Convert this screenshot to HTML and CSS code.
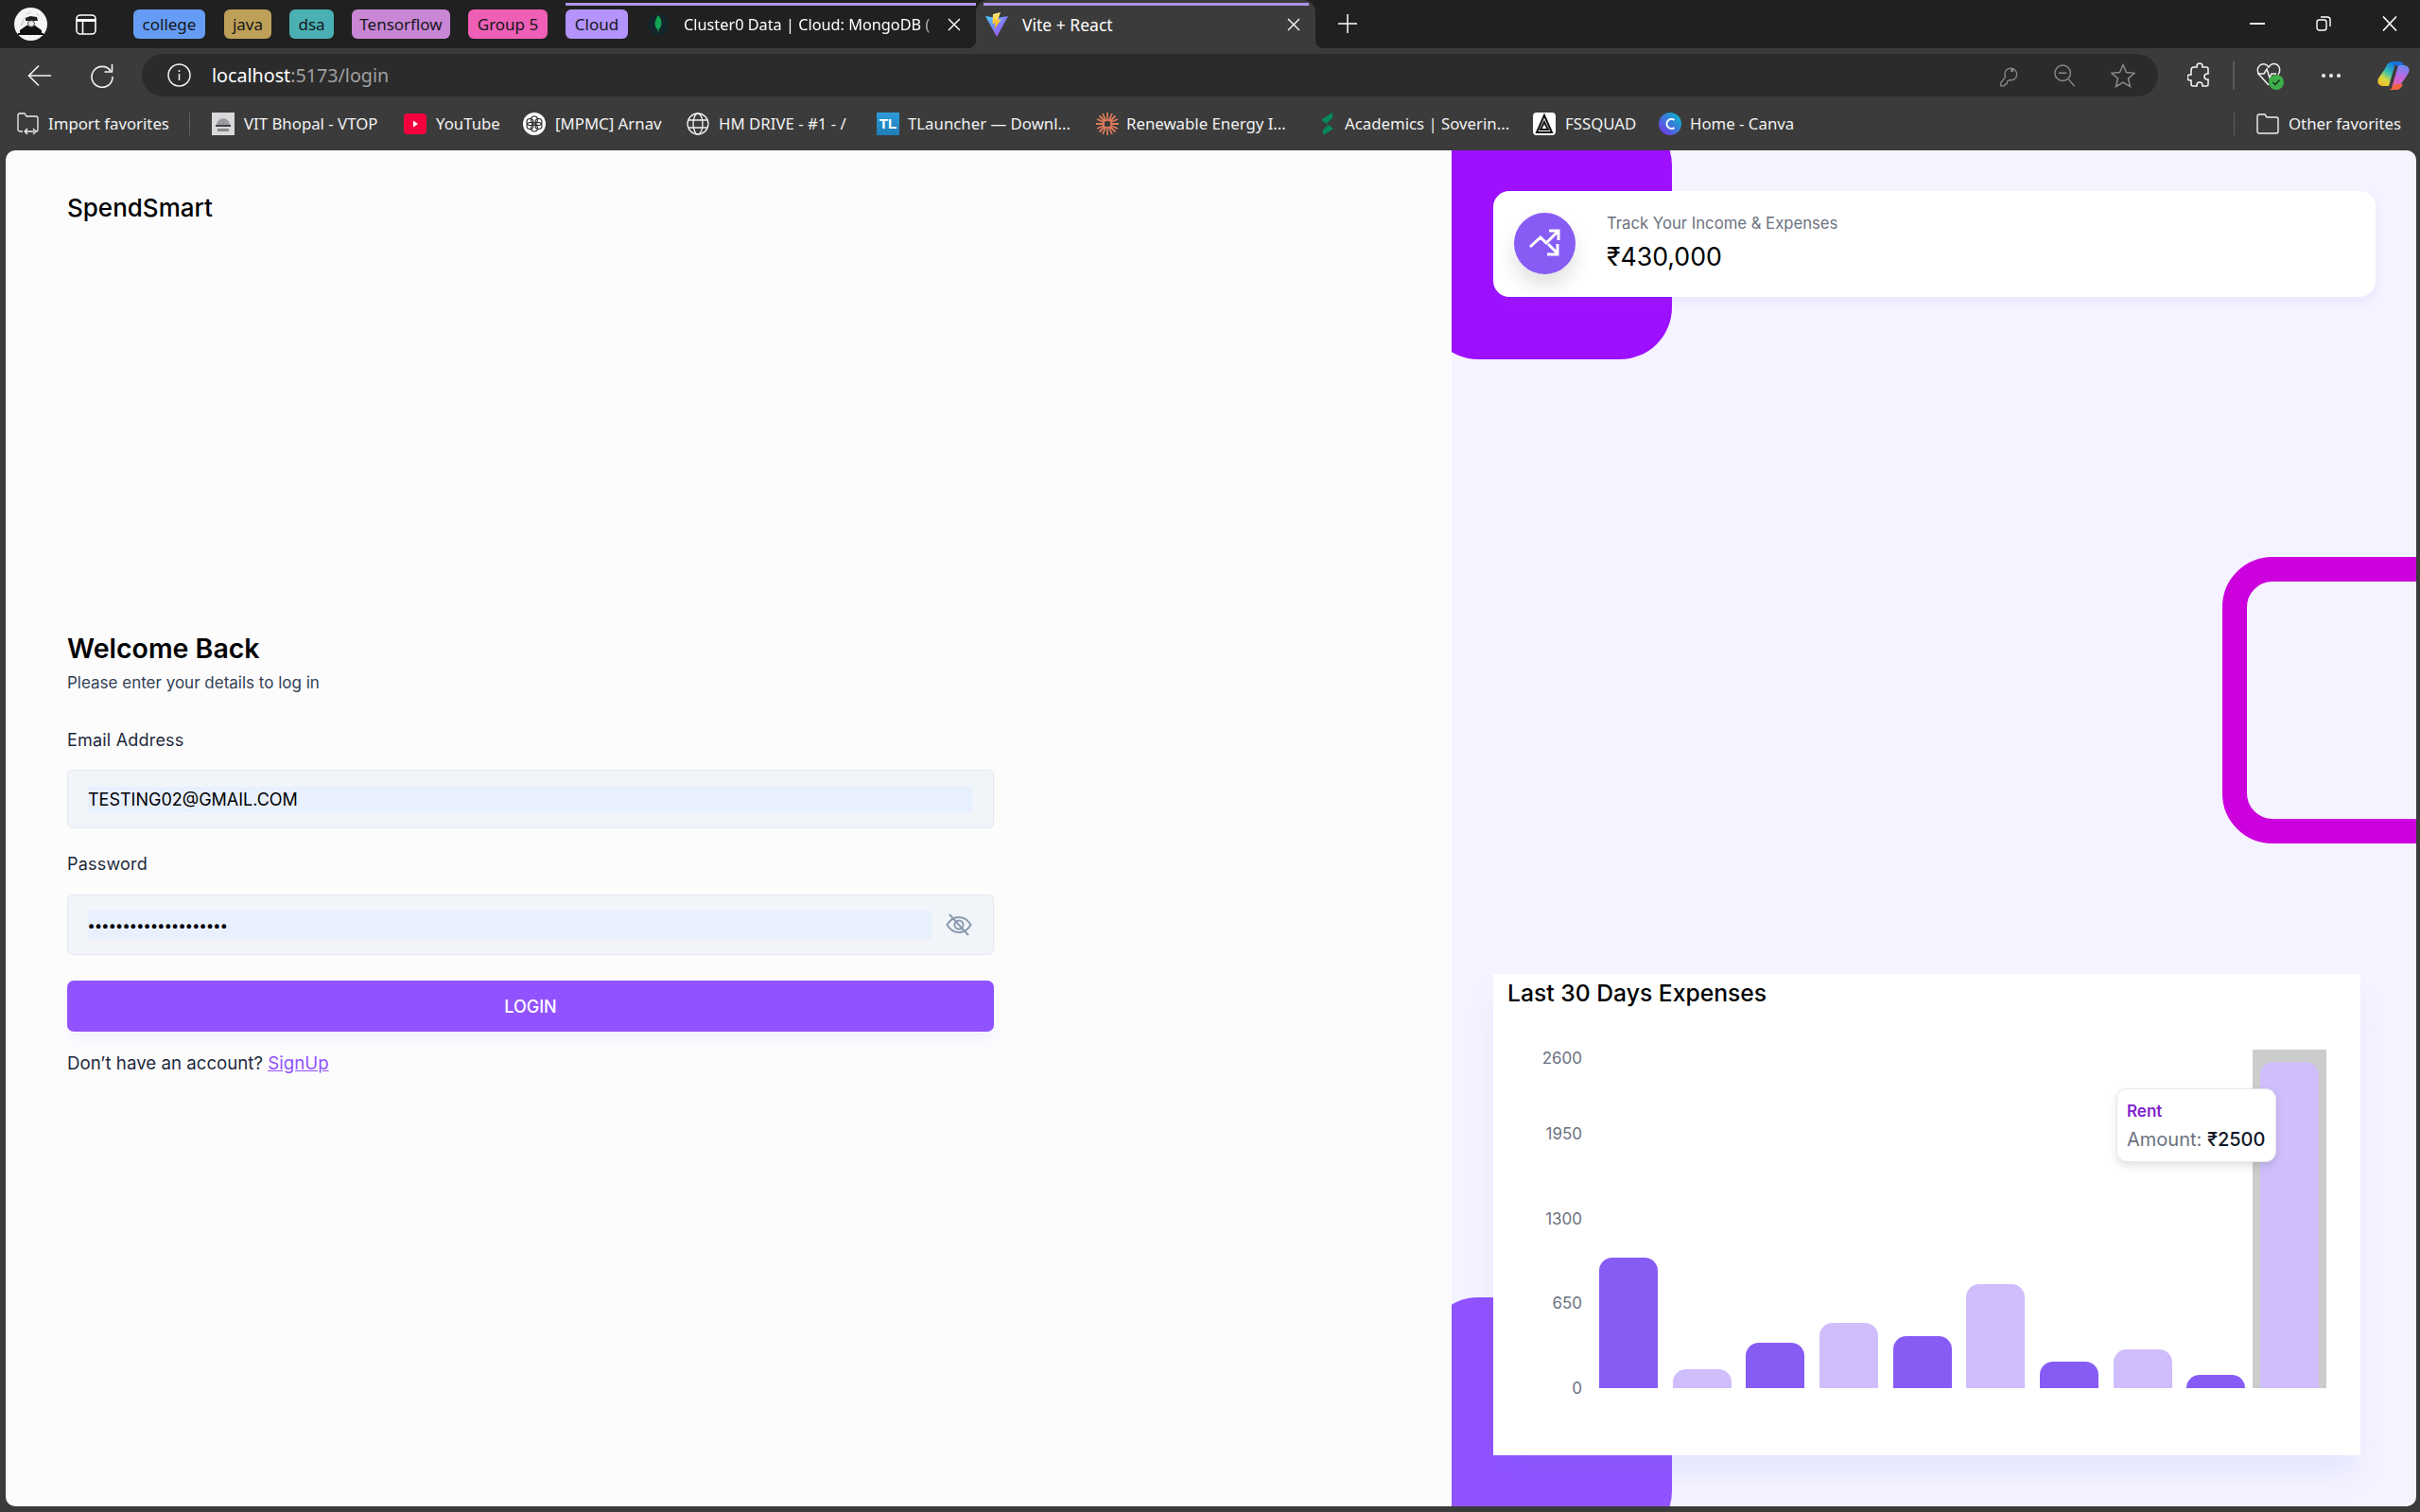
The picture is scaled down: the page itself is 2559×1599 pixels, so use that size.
FILE: index.html
```html
<!DOCTYPE html>
<html lang="en">
<head>
<meta charset="utf-8">
<title>Vite + React</title>
<link rel="stylesheet" href="styles.css">
</head>
<body>
<div class="browser">
  <header class="tabstrip">
    <div class="avatar">
      <svg width="35" height="35" viewBox="0 0 35 35"><circle cx="17.5" cy="17.5" r="17.5" fill="#f4f4f4"/><path d="M4 27h27v2H4zM6 24l7-5h9l7 5v3H6z" fill="#111"/><path d="M12 11l5-2 7 1 1 4H12z" fill="#1c1c1c"/><circle cx="18" cy="17" r="3.500" fill="#e4e4e4" stroke="#222" stroke-width=".8"/><path d="M8 19l3-9M13 7l5-2M23 6l3 3M9 15l-2 4" stroke="#bbb" stroke-width=".8"/></svg>
    </div>
    <svg class="tabs-action" width="22" height="22" viewBox="0 0 22 22" fill="none" stroke="#fff" stroke-width="1.6"><rect x="1" y="1" width="20" height="20" rx="4"/><path d="M1 6.500h20" stroke-width="3"/><path d="M7.500 6.500V21"/></svg>
    <div class="groups">
      <span class="group g-college">college</span>
      <span class="group g-java">java</span>
      <span class="group g-dsa">dsa</span>
      <span class="group g-tf">Tensorflow</span>
      <span class="group g-five">Group 5</span>
      <span class="group g-cloud">Cloud</span>
    </div>
    <div class="tab tab-mongo">
      <svg class="fav-mongo" width="22" height="32" viewBox="0 0 22 32"><circle cx="11" cy="16" r="11" fill="#12252c"/><path d="M11 6c3 3 4 7 3.400 10-.4 2.500-2 4.500-2.900 5.500L11 26l-.6-4.500C9 20 7.600 18 7.500 15.500 7.400 12 9.500 8.500 11 6z" fill="#13a24f"/></svg>
      <span class="tab-title tab-fade">Cluster0 Data | Cloud: MongoDB (</span>
      <svg class="close" width="14" height="14" viewBox="0 0 14 14" stroke="#fff" stroke-width="1.400"><path d="M1 1l12 12M13 1L1 13"/></svg>
    </div>
    <div class="tab tab-active">
      <svg width="24" height="26" viewBox="0 0 24 26"><defs><linearGradient id="vt" x1="0" y1="0" x2="1" y2="1"><stop offset="0" stop-color="#41d1ff"/><stop offset="1" stop-color="#bd34fe"/></linearGradient><linearGradient id="vl" x1="0" y1="0" x2="0" y2="1"><stop offset="0" stop-color="#ffea83"/><stop offset="1" stop-color="#ffa800"/></linearGradient></defs><path d="M0 4l12 2 12-2-12 22z" fill="url(#vt)"/><path d="M16 0L8 2l-.5 10 3-.6-.8 6 7-10-3.500.6z" fill="url(#vl)"/></svg>
      <span class="tab-title tab-grow">Vite + React</span>
      <svg class="close" width="14" height="14" viewBox="0 0 14 14" stroke="#fff" stroke-width="1.400"><path d="M1 1l12 12M13 1L1 13"/></svg>
    </div>
    <svg class="newtab" width="20" height="20" viewBox="0 0 20 20" stroke="#fff" stroke-width="1.500"><path d="M10 0v20M0 10h20"/></svg>
    <div class="winctl">
      <svg width="16" height="16" viewBox="0 0 16 16" stroke="#fff" stroke-width="1.800"><path d="M0 8h16"/></svg>
      <svg width="16" height="16" viewBox="0 0 16 16" fill="none" stroke="#fff" stroke-width="1.400"><rect x="1" y="4" width="10" height="11" rx="2.500"/><path d="M5 1h7a3 3 0 0 1 3 3v7"/></svg>
      <svg width="16" height="16" viewBox="0 0 16 16" stroke="#fff" stroke-width="1.600"><path d="M1 0.500l14 15M15 0.500l-14 15"/></svg>
    </div>
  </header>

  <nav class="toolbar">
    <svg class="tb-back" width="26" height="24" viewBox="0 0 26 24" fill="none" stroke="#f2f2f2" stroke-width="1.600"><path d="M25 12H2M12 1.500L1.500 12 12 22.500"/></svg>
    <svg class="tb-reload" width="26" height="26" viewBox="0 0 26 26" fill="none" stroke="#f2f2f2" stroke-width="1.600"><path d="M22 8a11 11 0 1 0 2 6M23.500 1v8h-8"/></svg>
    <div class="omnibox">
      <svg class="info" width="25" height="25" viewBox="0 0 25 25" fill="none" stroke="#f2f2f2" stroke-width="1.500"><circle cx="12.500" cy="12.500" r="11.500"/><path d="M12.500 11v7M12.500 7v2"/></svg>
      <span class="url"><b>localhost</b>:5173/login</span>
      <div class="omni-icons">
        <svg width="20" height="24" viewBox="0 0 22 26" fill="none" stroke="#8a8a8a" stroke-width="1.400"><path d="M2 21v4h4l1-2 2-.5.500-3 3-1.500c4 1 8-2 8-6.500a7 7 0 0 0-14-.5c0 1.500.3 2.500.8 3.500z"/><circle cx="15" cy="7" r="1.200"/></svg>
        <svg width="22" height="24" viewBox="0 0 24 26" fill="none" stroke="#8a8a8a" stroke-width="1.500"><circle cx="10" cy="10" r="9"/><path d="M5.500 10h9M16.500 17l7 8"/></svg>
        <svg width="26" height="26" viewBox="0 0 26 26" fill="none" stroke="#8a8a8a" stroke-width="1.500"><path d="M13 1.500l3.500 8 8.500.8-6.500 5.700 2 8.500L13 20l-7.500 4.500 2-8.500L1 10.300l8.500-.8z"/></svg>
      </div>
    </div>
    <div class="tb-right">
      <svg class="puzzle" width="24" height="28" viewBox="0 0 24 28" fill="none" stroke="#f2f2f2" stroke-width="1.600"><path d="M7 5h3V4a3 3 0 0 1 6 0v1h4a2 2 0 0 1 2 2v5h-1a3 3 0 0 0 0 6h1v5a2 2 0 0 1-2 2h-4v-1a3 3 0 0 0-6 0v1H6a2 2 0 0 1-2-2v-4H3a3 3 0 0 1 0-6h1V8a3 3 0 0 1 3-3z"/></svg>
      <span class="tb-div"></span>
      <svg class="heart" width="30" height="32" viewBox="0 0 30 32" fill="none" stroke="#f2f2f2" stroke-width="1.500"><path d="M13 26L3 15c-6-8 5-16 10-8 5-8 16-1 10 8"/><path d="M1 14h7l3-5 3 9 2-4h5"/><circle cx="21" cy="23" r="8" fill="#3fae4a" stroke="none"/><path d="M17.500 23l2.500 2.500 4.500-5" stroke="#16331a" stroke-width="1.500"/></svg>
      <span class="dots"><i></i><i></i><i></i></span>
      <svg class="copilot" width="34" height="30" viewBox="0 0 34 30"><defs><linearGradient id="c1" x1="0.700" y1="0" x2="0.200" y2="1"><stop offset="0" stop-color="#1478e0"/><stop offset=".4" stop-color="#36c0b0"/><stop offset=".7" stop-color="#d8d83c"/><stop offset="1" stop-color="#f5b82c"/></linearGradient><linearGradient id="c2" x1="0.600" y1="0" x2="0.400" y2="1"><stop offset="0" stop-color="#6a8af0"/><stop offset=".5" stop-color="#c264e0"/><stop offset="1" stop-color="#f0608c"/></linearGradient></defs><path d="M16 30c5 0 8-2 9-6l8-12c2-5-1-8-6-8h-5l-7 24c-.3 1 0 2 1 2z" fill="url(#c2)"/><path d="M18 0c-5 0-8 2-9 6L1 18c-2 5 1 8 6 8h5l7-24c.3-1 0-2-1-2z" fill="url(#c1)"/><path d="M18 0h5c3 0 4 2 5 4h-6l-3 1c.5-2 1-4-1-5z" fill="#1b6fe0"/><path d="M11 30h9c3 0 5-2 7-6h-7c-2 0-3 1-4 3-1 2-3 3-5 3z" fill="#f2633e"/></svg>
    </div>
  </nav>

  <nav class="bookmarks">
    <div class="bm bm-import"><svg width="23" height="24" viewBox="0 0 23 24" fill="none" stroke="#f2f2f2" stroke-width="1.300"><path d="M6 20H3a2 2 0 0 1-2-2V3a2 2 0 0 1 2-2h5l2 3h10a2 2 0 0 1 2 2v12a2 2 0 0 1-2 2h-1M8 20h10M8 20l3-3M8 20l3 3M20 20l-3-3M20 20l-3 3"/></svg><span>Import favorites</span></div>
    <span class="bm-div"></span>
    <div class="bm bm-vit"><svg width="24" height="24" viewBox="0 0 24 24"><rect width="24" height="24" fill="#d9d9dc"/><path d="M5 13c1-9 13-9 14 0z" fill="#9a9aa0"/><rect x="4" y="13" width="16" height="2" fill="#444"/><rect x="6" y="17" width="12" height="3" fill="#888"/></svg><span>VIT Bhopal - VTOP</span></div>
    <div class="bm bm-yt"><svg width="24" height="24" viewBox="0 0 24 24"><rect y="1" width="24" height="22" rx="4" fill="#f5013f"/><path d="M10 8.500l5 3.500-5 3.500z" fill="#fff"/></svg><span>YouTube</span></div>
    <div class="bm bm-mpmc"><svg width="24" height="24" viewBox="0 0 24 24" fill="none"><circle cx="12" cy="12" r="12" fill="#fff"/><g stroke="#222" stroke-width="1.100"><circle cx="12" cy="7.500" r="3.500"/><circle cx="12" cy="16.500" r="3.500"/><circle cx="7.500" cy="10" r="3.500"/><circle cx="16.500" cy="14" r="3.500"/><circle cx="16.500" cy="10" r="3.500"/><circle cx="7.500" cy="14" r="3.500"/></g></svg><span>[MPMC] Arnav</span></div>
    <div class="bm bm-hm"><svg width="24" height="24" viewBox="0 0 24 24" fill="none" stroke="#f2f2f2" stroke-width="1.300"><circle cx="12" cy="12" r="11"/><ellipse cx="12" cy="12" rx="5" ry="11"/><path d="M2 8h20M2 16h20"/></svg><span>HM DRIVE - #1 - /</span></div>
    <div class="bm bm-tl"><span class="tl-icon">TL</span><span>TLauncher — Downl...</span></div>
    <div class="bm bm-re"><svg width="24" height="24" viewBox="0 0 24 24" stroke="#dd7a5b" stroke-width="1.800"><path d="M12 0v9M12 15v9M0 12h9M15 12h9M3.500 3.500l6 6M14.500 14.500l6 6M20.500 3.500l-6 6M9.500 14.500l-6 6M7 1l3.500 8M13.500 15L17 23M17 1l-3.500 8M10.500 15L7 23M1 7l8 3.500M15 13.500l8 3.500M23 7l-8 3.500M9 13.500L1 17"/></svg><span>Renewable Energy I...</span></div>
    <div class="bm bm-ac"><svg width="20" height="24" viewBox="0 0 20 24"><path d="M15 0v6L8 12l7 4v2L5 24v-6l6-5-7-4V7z" fill="#05885f"/></svg><span>Academics | Soverin...</span></div>
    <div class="bm bm-fs"><svg width="24" height="24" viewBox="0 0 24 24" fill="none"><rect width="24" height="24" rx="4" fill="#fff"/><path d="M12 3L4 21h16zM12 10l-4 8h8z" stroke="#111" stroke-width="2"/></svg><span>FSSQUAD</span></div>
    <div class="bm bm-ca"><svg width="24" height="24" viewBox="0 0 24 24" fill="none"><defs><linearGradient id="cv" x1="0" y1="1" x2="1" y2="0"><stop offset="0" stop-color="#7d2ae8"/><stop offset="1" stop-color="#00c4cc"/></linearGradient></defs><circle cx="12" cy="12" r="12" fill="url(#cv)"/><path d="M16.500 8a5 5 0 1 0 0 8" stroke="#fff" stroke-width="2"/></svg><span>Home - Canva</span></div>
    <div class="bm-other">
      <span class="bm-div"></span>
      <div class="bm"><svg width="24" height="24" viewBox="0 0 24 24" fill="none" stroke="#f2f2f2" stroke-width="1.400"><path d="M1 4a2 2 0 0 1 2-2h6l2 3h10a2 2 0 0 1 2 2v13a2 2 0 0 1-2 2H3a2 2 0 0 1-2-2z"/></svg><span>Other favorites</span></div>
    </div>
  </nav>

  <main class="page">
    <section class="left">
      <h1 class="brand">SpendSmart</h1>
      <form class="form">
        <h2 class="welcome">Welcome Back</h2>
        <p class="sub">Please enter your details to log in</p>
        <label class="label label-email" for="em">Email Address</label>
        <div class="field field-email"><input id="em" class="inp" value="TESTING02@GMAIL.COM" readonly></div>
        <label class="label label-pass" for="pw">Password</label>
        <div class="field field-pass">
          <input id="pw" class="inp inp-pass" type="password" value="aaaaaaaaaaaaaaaaaaaa" readonly>
          <svg class="eye" width="28" height="24" viewBox="0 0 28 24" fill="none" stroke="#8a9bb0" stroke-width="2"><path d="M1.500 12C5 6 9 4 14 4s9 2 12.500 8c-3.500 6-7.500 8-12.500 8S5 18 1.500 12z"/><circle cx="14" cy="12" r="4.500"/><path d="M4 1l20 22"/></svg>
        </div>
        <button class="login" type="button">LOGIN</button>
        <p class="alt">Don’t have an account? <a href="#">SignUp</a></p>
      </form>
    </section>
    <section class="right">
      <div class="shape shape-top"></div>
      <div class="shape shape-ring"></div>
      <div class="shape shape-bottom"></div>
      <div class="stat">
        <div class="stat-ic"><svg width="65" height="65" viewBox="0 0 65 65" fill="none" stroke="#fff" stroke-width="3"><path d="M17 36l11-10 6 6 13-13M37 19h10v10M36 33l10 10M46 33v11H35"/></svg></div>
        <div class="stat-txt">
          <div class="stat-label">Track Your Income &amp; Expenses</div>
          <div class="stat-value">₹430,000</div>
        </div>
      </div>
      <div class="chartcard">
        <h3 class="chart-title">Last 30 Days Expenses</h3>
        <div class="chart">
          <div class="axis">
            <span style="top:8px">2600</span>
            <span style="top:88px">1950</span>
            <span style="top:178px">1300</span>
            <span style="top:267px">650</span>
            <span style="top:357px">0</span>
          </div>
          <div class="plot">
            <div class="cursor"></div>
            <div class="bar dark" style="height:138px"></div>
            <div class="bar light" style="height:20px"></div>
            <div class="bar dark" style="height:48px"></div>
            <div class="bar light" style="height:69px"></div>
            <div class="bar dark" style="height:55px"></div>
            <div class="bar light" style="height:110px"></div>
            <div class="bar dark" style="height:28px"></div>
            <div class="bar light" style="height:41px"></div>
            <div class="bar dark" style="height:14px"></div>
            <div class="bar light" style="height:345px"></div>
            <div class="tip">
              <div class="tip-name">Rent</div>
              <div class="tip-val">Amount: <b>₹2500</b></div>
            </div>
          </div>
        </div>
      </div>
    </section>
  </main>
</div>
</body>
</html>
```
FILE: styles.css
```css
* { box-sizing: border-box; }
html, body { margin: 0; padding: 0; height: 100%; overflow: hidden; }
body { background: #3b3b3b; font-family: "Inter", "Noto Sans", sans-serif; }
.browser { width: 2559px; height: 1599px; display: flex; flex-direction: column; }

/* chrome */
.tabstrip { height: 51px; background: #202020; display: flex; align-items: center; padding-left: 15px; font-family: "Noto Sans", sans-serif; color: #fff; position: relative; }
.avatar { width: 35px; height: 35px; display: flex; }
.tabs-action { margin-left: 30px; }
.groups { display: flex; margin-left: 39px; gap: 19px; height: 31px; }
.group { height: 31px; border-radius: 6px; color: #16161a; font-size: 17px; display: flex; align-items: center; justify-content: center; padding-bottom: 1px; }
.g-college { width: 76px; background: #659df6; }
.g-java { width: 50px; background: #bfa058; margin-left: 1px; }
.g-dsa { width: 47px; background: #4ab0b4; }
.g-tf { width: 104px; background: #c986d5; }
.g-five { width: 84px; background: #ee5fb5; }
.g-cloud { width: 66px; background: #b394fc; }
.tab { position: absolute; display: flex; align-items: center; }
.tab-mongo { top: 3px; height: 48px; left: 598px; width: 434px; border-top: 3px solid #ae94e8; padding: 0 16px 6px 125px; font-size: 16.300px; }
.fav-mongo { position: absolute; left: 87px; top: 4px; }
.tab-fade { width: 272px; white-space: nowrap; overflow: hidden; -webkit-mask-image: linear-gradient(90deg, #000 92%, transparent 100%); mask-image: linear-gradient(90deg, #000 92%, transparent 100%); }
.tab-mongo .close { margin-left: 8px; }
.tab-active { top: 0; height: 51px; left: 1032px; width: 359px; background: #3b3b3b; border-radius: 13px 13px 0 0; padding: 0 16px 0 10px; font-size: 17.500px; }
.tab-active::before { content: ""; position: absolute; left: 8px; right: 7px; top: 3px; height: 3px; background: #ae94e8; }
.tab-active::after { content: ""; position: absolute; left: -9px; right: -9px; bottom: 0; height: 9px; background:
  radial-gradient(circle at 0 0, #202020 9px, #3b3b3b 9.500px) left bottom / 9px 9px no-repeat,
  radial-gradient(circle at 100% 0, #202020 9px, #3b3b3b 9.500px) right bottom / 9px 9px no-repeat; }
.tab-active .tab-title { margin-left: 15px; }
.tab-grow { flex: 1; }
.newtab { position: absolute; left: 1415px; top: 15px; }
.winctl { position: absolute; left: 2379px; top: 17px; display: flex; gap: 54px; }

.toolbar { height: 51px; background: #3b3b3b; display: flex; align-items: center; padding: 6px 0 0 29px; font-family: "Noto Sans", sans-serif; }
.tb-reload { margin-left: 40px; }
.omnibox { margin-left: 29px; width: 2132px; height: 45px; background: #2b2b2b; border-radius: 23px; display: flex; align-items: center; padding-left: 27px; }
.info { flex: none; }
.url { margin-left: 22px; font-size: 19.700px; color: #a0a0a0; }
.url b { font-weight: 400; color: #fff; }
.omni-icons { margin-left: auto; margin-right: 24px; display: flex; align-items: center; gap: 38px; }
.tb-right { display: flex; align-items: center; margin-left: 31px; }
.tb-div { width: 2px; height: 30px; background: #5a5a5a; margin-left: 24px; }
.heart { margin-left: 23px; }
.dots { display: flex; gap: 4px; margin-left: 39px; }
.dots i { width: 4px; height: 4px; border-radius: 50%; background: #f2f2f2; display: block; }
.copilot { margin-left: 39px; }

.bookmarks { height: 57px; background: #3b3b3b; display: flex; align-items: center; padding-left: 18px; font-family: "Noto Sans", sans-serif; font-size: 16.800px; color: #f2f2f2; }
.bm { display: flex; align-items: center; gap: 10px; white-space: nowrap; flex: none; }
.bm-import { width: 182px; }
.bm-vit { width: 203px; }
.bm-yt { width: 126px; }
.bm-mpmc { width: 173px; }
.bm-hm { width: 201px; }
.bm-tl { width: 232px; gap: 9px; }
.bm-re { width: 235px; gap: 8px; }
.bm-ac { width: 227px; gap: 8px; }
.bm-fs { width: 133px; }
.bm-ca { width: 150px; gap: 9px; }
.bm-div { width: 1px; height: 24px; background: #5f5f5f; margin-right: 23px; flex: none; }
.tl-icon { width: 24px; height: 24px; background: linear-gradient(180deg,#2f9bdc,#1f7fb8); color: #fff; font: 700 15px "Liberation Sans", sans-serif; display: flex; align-items: center; justify-content: center; }
.bm-other { margin-left: auto; display: flex; align-items: center; padding-right: 20px; }

/* page */
.page { flex: none; height: 1434px; margin: 0 4px 0 6px; border-radius: 10px; overflow: hidden; display: grid; grid-template-columns: 1529px 1fr; }
.left { background: #fcfcfd; padding: 0 0 0 65px; display: flex; flex-direction: column; }
.brand { margin: 47px 0 0; font-size: 26px; line-height: 28px; font-weight: 500; color: #000; }
.form { width: 980px; margin-top: 435px; display: flex; flex-direction: column; }
.welcome { margin: 0; font-size: 28.500px; line-height: 34px; font-weight: 600; color: #000; }
.sub { margin: 9px 0 0; font-size: 17px; line-height: 20px; color: #334155; }
.label { font-size: 18px; letter-spacing: .2px; line-height: 22px; color: #1e293b; display: block; }
.label-email { margin-top: 40px; }
.label-pass { margin-top: 27px; }
.field { margin-top: 20px; background: #f1f5f9; border: 1px solid #e2e8f0; border-radius: 6px; display: flex; align-items: center; padding: 0 22px 0 21px; }
.field-email { height: 62px; }
.field-pass { height: 64px; margin-top: 21px; }
.inp { flex: 1; min-width: 0; border: 0; outline: 0; background: #e8f0fe; padding: 0; margin: 0; font: 400 18px "Inter", sans-serif; color: #000; height: 27px; }
.inp-pass { height: 30px; letter-spacing: .27px; font-size: 15px; font-weight: 700; }
.eye { margin-left: 15px; flex: none; }
.login { margin-top: 27px; height: 54px; border: 0; border-radius: 7px; background: #9152ff; color: #fff; font: 500 18px "Inter", sans-serif; box-shadow: 0 10px 15px -3px rgba(145,82,255,.08); }
.alt { margin: 23px 0 0; font-size: 18.700px; line-height: 22px; color: #1e293b; }
.alt a { color: #9152ff; }

.right { position: relative; overflow: hidden; background: #f5f3ff; display: flex; flex-direction: column; padding-left: 44px; }
.shape { position: absolute; }
.shape-top { left: -27px; top: -39px; width: 260px; height: 260px; border-radius: 55px; background: #9d10ff; }
.shape-ring { left: 815px; top: 430px; width: 260px; height: 303px; border-radius: 53px; border: 26px solid #cb00dc; }
.shape-bottom { left: -27px; top: 1213px; width: 260px; height: 260px; border-radius: 55px; background: #9152ff; }

.stat { position: relative; z-index: 1; width: 933px; height: 112px; margin-top: 43px; background: #fff; border-radius: 17px; box-shadow: 0 6px 12px rgba(139,92,246,.08); display: flex; align-items: center; padding-left: 22px; }
.stat-ic { width: 65px; height: 65px; border-radius: 50%; background: #875cf5; box-shadow: 0 12px 20px rgba(0,0,0,.12); flex: none; margin-top: -1px; }
.stat-txt { margin: -4px 0 0 33px; }
.stat-label { font-size: 16.700px; line-height: 22px; color: #6b7280; }
.stat-value { font-size: 26.700px; line-height: 34px; margin-top: 7px; font-weight: 400; color: #000; }

.chartcard { position: relative; z-index: 1; width: 917px; height: 509px; margin-top: 716px; background: #fff; box-shadow: 0 22px 30px -6px rgba(96,130,250,.13); padding: 0 0 0 15px; }
.chart-title { margin: 5px 0 0; font-size: 24.700px; line-height: 30px; font-weight: 500; color: #000; }
.chart { display: flex; margin-top: 45px; margin-left: -15px; }
.axis { position: relative; width: 94px; height: 358px; margin-right: 18px; font-size: 17px; color: #6b7280; }
.axis span { position: absolute; right: 0; line-height: 2px; height: 2px; }
.plot { position: relative; width: 761px; height: 358px; display: flex; align-items: flex-end; justify-content: space-between; }
.cursor { position: absolute; left: 691px; top: 0; bottom: 0; width: 78px; background: #ccc; }
.bar { position: relative; width: 62px; border-radius: 14px 14px 0 0; }
.dark { background: #875cf5; }
.light { background: #cfbefb; }
.tip { position: absolute; left: 547px; top: 41px; width: 169px; height: 78px; background: #fff; border: 1px solid #e5e7eb; border-radius: 11px; box-shadow: 0 4px 8px rgba(0,0,0,.12); padding: 13px 0 0 10px; z-index: 2; }
.tip-name { font-size: 17px; line-height: 20px; font-weight: 600; color: #7e22ce; }
.tip-val { margin-top: 8px; font-size: 20px; line-height: 24px; color: #6b7280; white-space: nowrap; }
.tip-val b { font-weight: 500; color: #111827; }
```
